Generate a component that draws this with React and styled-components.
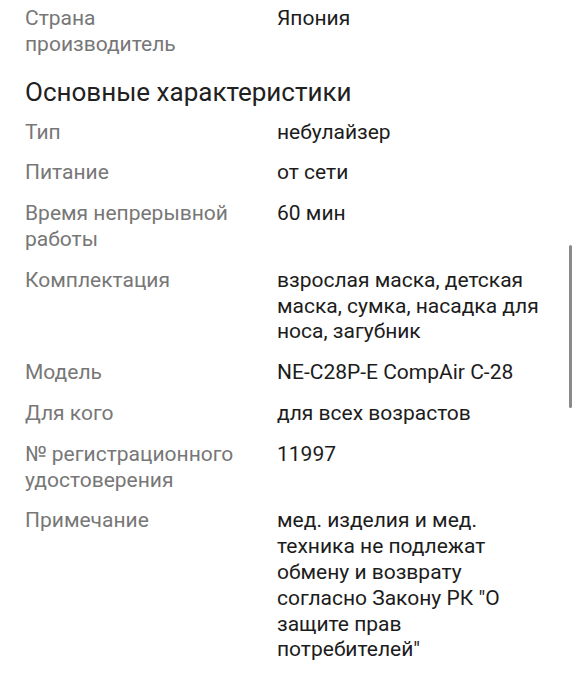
import React from 'react';
import styled, { createGlobalStyle } from 'styled-components';

const GlobalStyle = createGlobalStyle`
  html, body {
    margin: 0;
    padding: 0;
    background: #ffffff;
  }
  body {
    font-family: Roboto, "Noto Sans", "Liberation Sans", sans-serif;
    -webkit-font-smoothing: antialiased;
  }
`;

const Page = styled.main`
  position: relative;
  padding: 6px 29px 30px 25px;
  background: #fff;
  min-height: 700px;
  box-sizing: border-box;
`;

const Section = styled.section`
  display: flex;
  flex-direction: column;
  gap: 15px;
`;

const Heading = styled.h2`
  margin: 18px 0 12px;
  font-size: 26px;
  line-height: 32px;
  font-weight: 400;
  color: #212121;
`;

const Row = styled.div`
  display: grid;
  grid-template-columns: 218px 1fr;
  column-gap: 34px;
  font-size: 21px;
  line-height: 25.8px;
`;

const Label = styled.div`
  color: #777777;
`;

const Value = styled.div`
  color: #1c1c1c;
`;

const ScrollThumb = styled.div`
  position: absolute;
  top: 245px;
  right: 5px;
  width: 3px;
  height: 163px;
  border-radius: 2px;
  background: #8a8a8a;
`;

const origin = [
  { label: 'Страна производитель', value: 'Япония' },
];

const specs = [
  { label: 'Тип', value: 'небулайзер' },
  { label: 'Питание', value: 'от сети' },
  { label: 'Время непрерывной работы', value: '60 мин' },
  { label: 'Комплектация', value: 'взрослая маска, детская маска, сумка, насадка для носа, загубник' },
  { label: 'Модель', value: 'NE-C28P-E CompAir C-28' },
  { label: 'Для кого', value: 'для всех возрастов' },
  { label: '№ регистрационного удостоверения', value: '11997' },
  { label: 'Примечание', value: 'мед. изделия и мед. техника не подлежат обмену и возврату согласно Закону РК "О защите прав потребителей"' },
];

const renderRows = (rows) =>
  rows.map((item, index) => (
    <Row key={index}>
      <Label>{item.label}</Label>
      <Value>{item.value}</Value>
    </Row>
  ));

export default function App() {
  return (
    <>
      <GlobalStyle />
      <Page>
        <Section>{renderRows(origin)}</Section>

        <Heading>Основные характеристики</Heading>

        <Section>{renderRows(specs)}</Section>

        <ScrollThumb />
      </Page>
    </>
  );
}
